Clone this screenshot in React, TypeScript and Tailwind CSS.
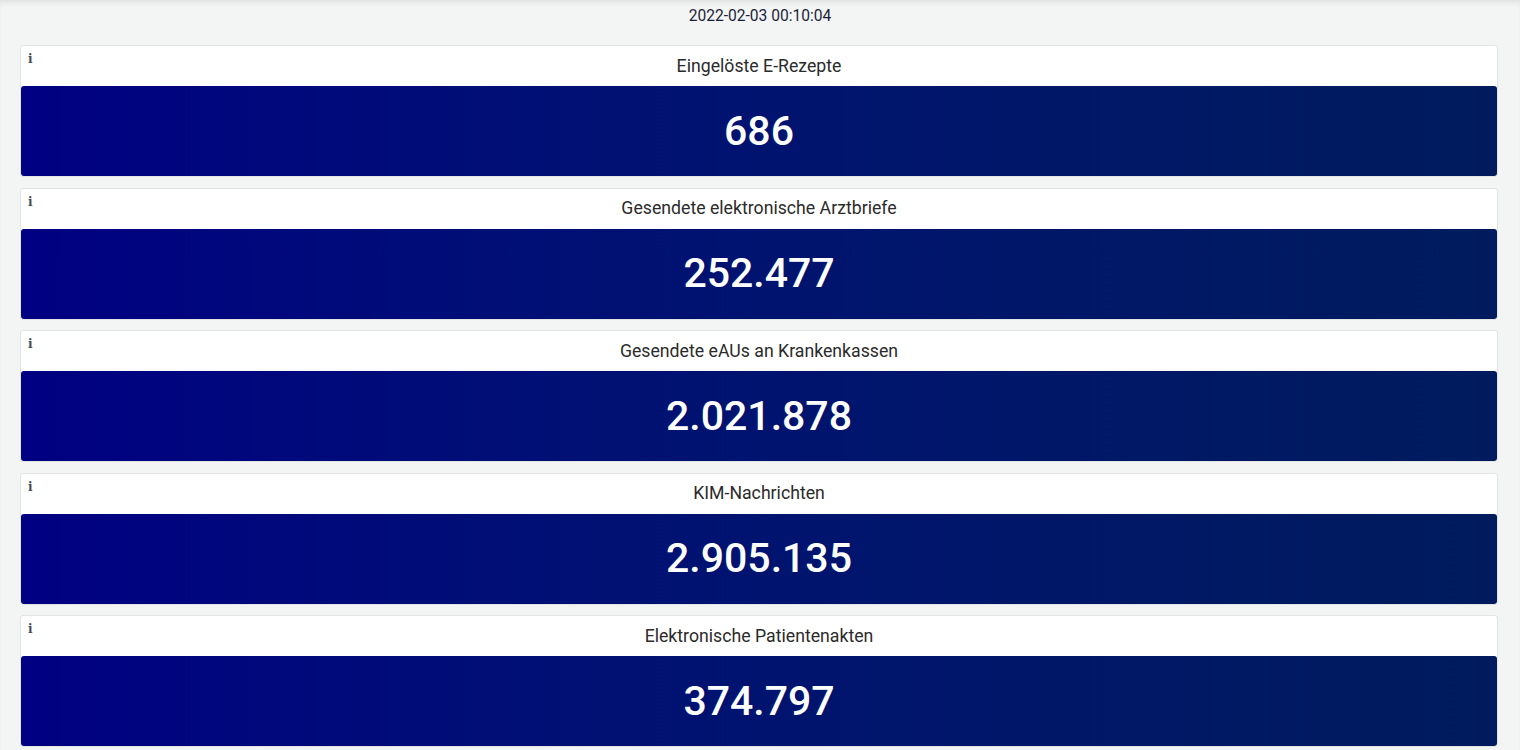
const stats = [
  { label: "Eingelöste E-Rezepte", value: "686" },
  { label: "Gesendete elektronische Arztbriefe", value: "252.477" },
  { label: "Gesendete eAUs an Krankenkassen", value: "2.021.878" },
  { label: "KIM-Nachrichten", value: "2.905.135" },
  { label: "Elektronische Patientenakten", value: "374.797" },
];

function StatCard({ label, value }: { label: string; value: string }) {
  return (
    <div className="rounded-[3px] border border-[#e2e3e3] bg-white">
      <div className="relative flex h-[40px] items-center justify-center">
        <span className="absolute left-[7px] top-[7px] font-['DejaVu_Serif',serif] text-[12px] font-bold leading-none text-[#4a4a55]">
          i
        </span>
        <span className="text-[17.7px] text-[#2b2b2b]">{label}</span>
      </div>
      <div className="flex h-[90px] items-center justify-center rounded-[3px] bg-gradient-to-r from-[#000082] to-[#001b5d]">
        <span className="text-[41px] font-medium leading-none text-white">{value}</span>
      </div>
    </div>
  );
}

export default function App() {
  return (
    <div className="min-h-screen bg-[#f3f4f4] pb-6 font-['Roboto',sans-serif] shadow-[inset_0_5px_6px_-3px_rgba(0,0,0,0.09)]">
      <p className="pt-[5px] text-center text-[15.6px] leading-[22px] text-[#1c1f3a]">
        2022-02-03 00:10:04
      </p>
      <div className="mt-[18px] flex flex-col gap-[10.5px] pl-5 pr-[22px]">
        {stats.map((s) => (
          <StatCard key={s.label} label={s.label} value={s.value} />
        ))}
      </div>
    </div>
  );
}
